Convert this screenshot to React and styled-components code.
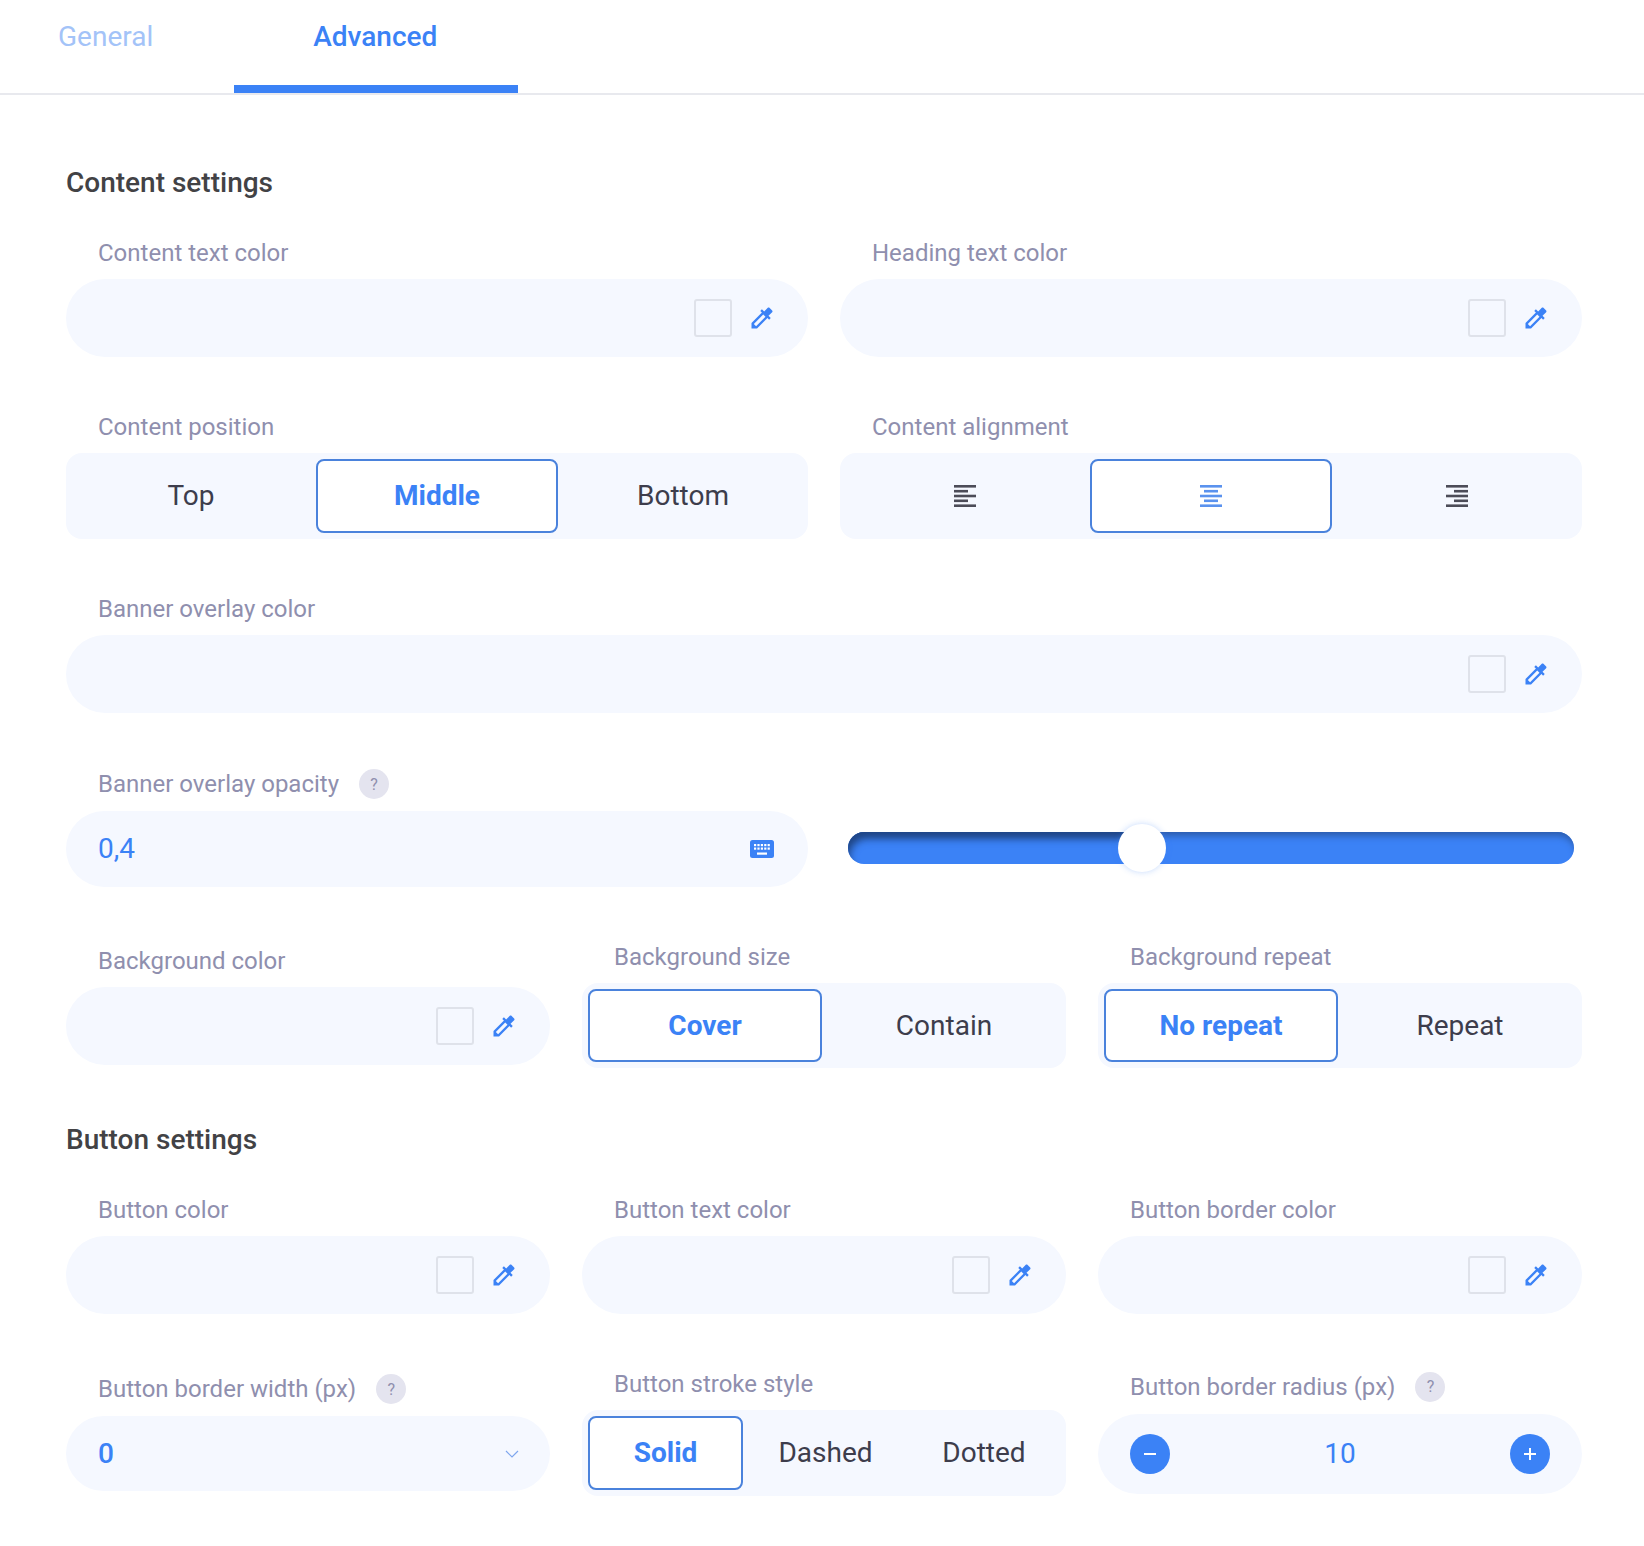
import React from 'react';
import styled, { createGlobalStyle } from 'styled-components';

const BLUE = '#3b82f6';
const LIGHT_BG = '#f5f8ff';

const GlobalStyle = createGlobalStyle`
  html, body {
    margin: 0;
    padding: 0;
    background: #fff;
  }
  * {
    box-sizing: border-box;
  }
`;

const Page = styled.div`
  width: 1644px;
  height: 1546px;
  overflow: hidden;
  font-family: Roboto, 'Liberation Sans', sans-serif;
`;

const Tabs = styled.div`
  display: flex;
  height: 95px;
  border-bottom: 2px solid #e8e9ee;
`;

const Tab = styled.div`
  height: 93px;
  padding: 20px 81px 0 79px;
  font-size: 28px;
  line-height: 34px;
  font-weight: ${p => (p.$active ? 500 : 400)};
  color: ${p => (p.$active ? BLUE : '#a3c3f8')};
  border-bottom: 8px solid ${p => (p.$active ? BLUE : 'transparent')};

  &:first-child {
    padding: 20px 81px 0 58px;
  }
`;

const Content = styled.div`
  padding: 0 62px 0 66px;
`;

const SectionTitle = styled.h2`
  margin: ${p => p.$top}px 0 0;
  font-size: 28px;
  line-height: 34px;
  font-weight: 500;
  color: #424245;
`;

const Row = styled.div`
  display: grid;
  grid-template-columns: repeat(${p => p.$cols}, minmax(0, 1fr));
  column-gap: 32px;
  align-items: center;
  margin-top: ${p => p.$top}px;
`;

const Label = styled.div`
  display: flex;
  align-items: center;
  height: 28px;
  margin-bottom: ${p => p.$gap || 12}px;
  padding-left: 32px;
  font-size: 24px;
  color: #8f8fae;
`;

const Help = styled.span`
  display: flex;
  align-items: center;
  justify-content: center;
  width: 30px;
  height: 30px;
  margin-left: 20px;
  border-radius: 50%;
  background: #e4e4ef;
  color: #8f8fae;
  font-size: 16px;
`;

const Field = styled.div`
  display: flex;
  align-items: center;
  justify-content: ${p => p.$justify || 'flex-end'};
  height: ${p => p.$height || 78}px;
  padding: 0 ${p => p.$padRight || 32}px ${p => p.$lift ?? 2}px 32px;
  border-radius: 40px;
  background: ${LIGHT_BG};
  color: ${BLUE};
  font-size: 28px;
  font-weight: ${p => p.$weight || 400};
`;

const Swatch = styled.span`
  width: 38px;
  height: 38px;
  margin: 2px 16px 0 0;
  border: 2px solid #dfe2ea;
  border-radius: 3px;
`;

const DropperIcon = styled.svg`
  width: 28px;
  height: 28px;
  margin-top: 2px;
  fill: ${BLUE};
`;

const KeyboardIcon = styled.svg`
  width: 24px;
  height: 18px;
  margin: 2px 2px 0 0;
`;

const Segments = styled.div`
  display: grid;
  grid-template-columns: ${p => p.$columns};
  height: ${p => p.$height || 86}px;
  padding: 6px;
  border-radius: 16px;
  background: ${LIGHT_BG};
`;

const Segment = styled.div`
  display: flex;
  align-items: center;
  justify-content: center;
  padding: 0 ${p => (p.$side === 'before' ? 6 : 0)}px ${p => p.$lift ?? 2}px ${p => (p.$side === 'after' ? 6 : 0)}px;
  border: 2px solid ${p => (p.$active ? '#4a82dc' : 'transparent')};
  border-radius: 8px;
  background: ${p => (p.$active ? '#fff' : 'transparent')};
  color: ${p => (p.$active ? BLUE : '#3d3d4c')};
  font-size: 28px;
  font-weight: ${p => (p.$active ? 700 : 400)};
`;

const SliderWrap = styled.div`
  align-self: end;
  display: flex;
  align-items: center;
  height: 75px;
  padding: 0 8px 3px;
`;

const Track = styled.div`
  position: relative;
  flex: 1;
  height: 32px;
  border-radius: 16px;
  background: ${BLUE};
  box-shadow: inset 0 7px 7px -3px #2c5cab;
`;

const TrackFill = styled.div`
  position: absolute;
  top: 0;
  left: 0;
  bottom: 0;
  border-radius: 16px 0 0 16px;
  box-shadow: inset 4px 9px 8px -3px #1f4585;
`;

const Thumb = styled.div`
  position: absolute;
  top: -8px;
  width: 48px;
  height: 48px;
  margin-left: -24px;
  border-radius: 50%;
  background: #fff;
  box-shadow: 0 0 6px rgba(59, 130, 246, 0.3);
`;

const Stepper = styled.div`
  display: flex;
  align-items: center;
  justify-content: space-between;
  height: 80px;
  padding: 0 32px;
  border-radius: 40px;
  background: ${LIGHT_BG};
  color: ${BLUE};
  font-size: 28px;
`;

const StepButton = styled.span`
  display: flex;
  align-items: center;
  justify-content: center;
  width: 40px;
  height: 40px;
  border-radius: 50%;
  background: ${BLUE};
`;

const Eyedropper = () => (
  <DropperIcon viewBox="0 0 24 24">
    <path d="M20.71 5.63l-2.34-2.34c-.39-.39-1.02-.39-1.41 0l-3.12 3.12-1.93-1.91-1.41 1.41 1.42 1.42L3 16.25V21h4.75l8.92-8.92 1.42 1.42 1.41-1.41-1.92-1.92 3.12-3.12c.4-.4.4-1.03.01-1.42zM6.92 19L5 17.08l8.06-8.06 1.92 1.92L6.92 19z" />
  </DropperIcon>
);

const Keyboard = () => (
  <KeyboardIcon viewBox="0 0 24 18">
    <rect width="24" height="18" rx="2.5" fill={BLUE} />
    {[0, 1, 2, 3, 4].map(col =>
      [4, 7.5].map(y => (
        <rect key={`${col}-${y}`} x={4 + col * 3.4} y={y} width="2.2" height="2.2" fill="#fff" />
      )),
    )}
    <rect x="7" y="12.5" width="10" height="2.2" fill="#fff" />
  </KeyboardIcon>
);

const Chevron = () => (
  <svg width="14" height="8" viewBox="0 0 14 8" fill="none" stroke="#7ea6ee" strokeWidth="1.2">
    <path d="M1 1l6 6 6-6" />
  </svg>
);

// short lines of the align icons start at a different x per alignment
const shortLineX = { left: 0, center: 4, right: 8 };

const AlignIcon = ({ align, color }) => (
  <svg width="22" height="22" viewBox="0 0 22 22" fill={color}>
    <rect x="0" y="0" width="22" height="2.6" />
    <rect x={shortLineX[align]} y="4.900" width="14" height="2.6" />
    <rect x="0" y="9.700" width="22" height="2.6" />
    <rect x={shortLineX[align]} y="14.500" width="14" height="2.6" />
    <rect x="0" y="19.400" width="22" height="2.6" />
  </svg>
);

const ColorField = ({ label, height, gap }) => (
  <div>
    <Label $gap={gap}>{label}</Label>
    <Field $height={height}>
      <Swatch />
      <Eyedropper />
    </Field>
  </div>
);

const SegmentField = ({ label, columns, height, lift, offset = true, items }) => {
  const activeIndex = items.findIndex(item => item.active);
  const sideOf = index => {
    if (!offset || index === activeIndex) return null;
    return index < activeIndex ? 'before' : 'after';
  };
  return (
    <div>
      <Label>{label}</Label>
      <Segments $columns={columns || `repeat(${items.length}, 1fr)`} $height={height}>
        {items.map((item, index) => (
          <Segment key={item.key} $active={item.active} $side={sideOf(index)} $lift={lift}>
            {item.content}
          </Segment>
        ))}
      </Segments>
    </div>
  );
};

const textItems = (names, active) =>
  names.map(name => ({ key: name, content: name, active: name === active }));

const alignItems = ['left', 'center', 'right'].map(align => ({
  key: align,
  active: align === 'center',
  content: <AlignIcon align={align} color={align === 'center' ? '#5a92ee' : '#4c4c58'} />,
}));

const opacity = 0.405;

export default function App() {
  return (
    <Page>
      <GlobalStyle />
      <Tabs>
        <Tab>General</Tab>
        <Tab $active>Advanced</Tab>
      </Tabs>
      <Content>
        <SectionTitle $top={71}>Content settings</SectionTitle>
        <Row $cols={2} $top={39}>
          <ColorField label="Content text color" />
          <ColorField label="Heading text color" />
        </Row>
        <Row $cols={2} $top={56}>
          <SegmentField
            label="Content position"
            columns="1fr 242px 1fr"
            items={textItems(['Top', 'Middle', 'Bottom'], 'Middle')}
          />
          <SegmentField label="Content alignment" columns="1fr 242px 1fr" lift={0} items={alignItems} />
        </Row>
        <Row $cols={1} $top={56}>
          <ColorField label="Banner overlay color" />
        </Row>
        <Row $cols={2} $top={57}>
          <div>
            <Label $gap={13}>
              Banner overlay opacity
              <Help>?</Help>
            </Label>
            <Field $height={76} $justify="space-between">
              0,4
              <Keyboard />
            </Field>
          </div>
          <SliderWrap>
            <Track>
              <TrackFill style={{ width: `${opacity * 100}%` }} />
              <Thumb style={{ left: `${opacity * 100}%` }} />
            </Track>
          </SliderWrap>
        </Row>
        <Row $cols={3} $top={56}>
          <ColorField label="Background color" />
          <SegmentField
            label="Background size"
            columns="234px 1fr"
            height={85}
            lift={0}
            items={textItems(['Cover', 'Contain'], 'Cover')}
          />
          <SegmentField
            label="Background repeat"
            columns="234px 1fr"
            height={85}
            lift={0}
            items={textItems(['No repeat', 'Repeat'], 'No repeat')}
          />
        </Row>
        <SectionTitle $top={55}>Button settings</SectionTitle>
        <Row $cols={3} $top={39}>
          <ColorField label="Button color" />
          <ColorField label="Button text color" />
          <ColorField label="Button border color" />
        </Row>
        <Row $cols={3} $top={56}>
          <div>
            <Label $gap={13}>
              Button border width (px)
              <Help>?</Help>
            </Label>
            <Field $height={75} $justify="space-between" $padRight={31} $weight={500} $lift={0}>
              0
              <Chevron />
            </Field>
          </div>
          <SegmentField
            label="Button stroke style"
            columns="155px 165px 152px"
            offset={false}
            items={textItems(['Solid', 'Dashed', 'Dotted'], 'Solid')}
          />
          <div>
            <Label $gap={13}>
              Button border radius (px)
              <Help>?</Help>
            </Label>
            <Stepper>
              <StepButton>
                <svg width="14" height="14" viewBox="0 0 14 14" stroke="#fff" strokeWidth="2">
                  <path d="M1 7h12" />
                </svg>
              </StepButton>
              10
              <StepButton>
                <svg width="14" height="14" viewBox="0 0 14 14" stroke="#fff" strokeWidth="2">
                  <path d="M1 7h12M7 1v12" />
                </svg>
              </StepButton>
            </Stepper>
          </div>
        </Row>
      </Content>
    </Page>
  );
}
